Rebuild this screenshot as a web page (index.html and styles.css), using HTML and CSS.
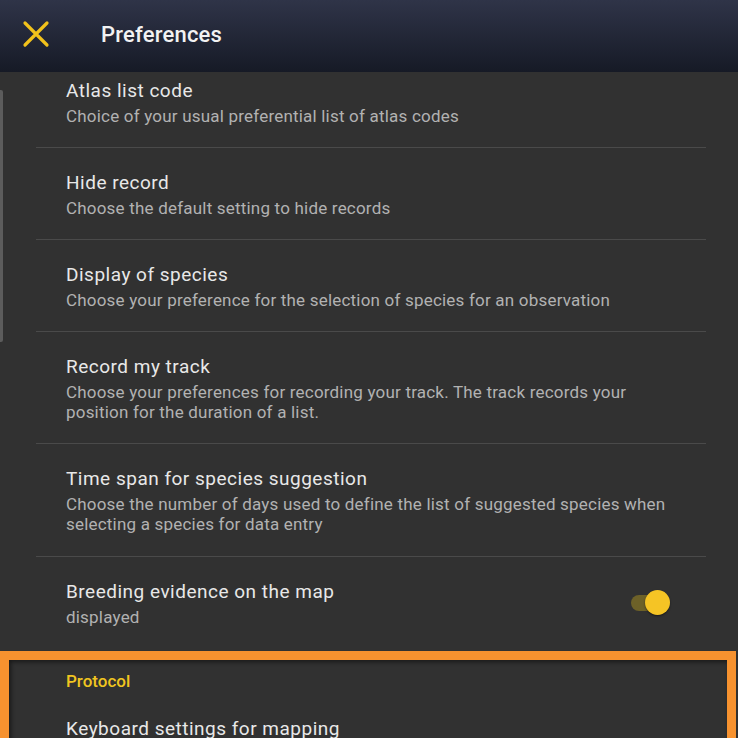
FILE: index.html
```html
<!DOCTYPE html>
<html>
<head>
<meta charset="utf-8">
<link rel="stylesheet" href="styles.css">
</head>
<body>
<div class="app">
  <header class="topbar">
    <svg class="close" width="28" height="28" viewBox="0 0 28 28"><path d="M3 3 L25 25 M25 3 L3 25" stroke="#f2c21b" stroke-width="3.2" stroke-linecap="round" fill="none"/></svg>
    <h1 class="title">Preferences</h1>
  </header>
  <main class="scroll">
    <div class="scrollbar"></div>
    <div class="list">
      <div class="item first">
        <div class="item-title">Atlas list code</div>
        <div class="item-sub">Choice of your usual preferential list of atlas codes</div>
      </div>
      <div class="item">
        <div class="item-title">Hide record</div>
        <div class="item-sub">Choose the default setting to hide records</div>
      </div>
      <div class="item">
        <div class="item-title">Display of species</div>
        <div class="item-sub">Choose your preference for the selection of species for an observation</div>
      </div>
      <div class="item tall">
        <div class="item-title">Record my track</div>
        <div class="item-sub">Choose your preferences for recording your track. The track records your position for the duration of a list.</div>
      </div>
      <div class="item tall">
        <div class="item-title">Time span for species suggestion</div>
        <div class="item-sub">Choose the number of days used to define the list of suggested species when selecting a species for data entry</div>
      </div>
      <div class="item toggle-item last">
        <div class="item-text">
          <div class="item-title">Breeding evidence on the map</div>
          <div class="item-sub">displayed</div>
        </div>
        <div class="switch"><div class="track"></div><div class="thumb"></div></div>
      </div>
      <div class="section">
        <div class="section-title">Protocol</div>
        <div class="item-title kb">Keyboard settings for mapping</div>
      </div>
    </div>
    <div class="highlight"></div>
  </main>
</div>
</body>
</html>
```
FILE: styles.css
```css
* { box-sizing: border-box; margin: 0; padding: 0; }
html, body { width: 738px; height: 738px; overflow: hidden; }
body { background: #313131; font-family: Roboto, "Noto Sans", sans-serif; color: #e6e6e6; }
.app { width: 738px; height: 738px; display: flex; flex-direction: column; }
.topbar {
  height: 72px; flex: none; display: flex; align-items: center;
  background: linear-gradient(#2f3448, #161a26);
  padding-left: 22px; position: relative; z-index: 2;
}
.close { flex: none; margin-top: -4px; }
.title { font-size: 22px; font-weight: 500; color: #f2f2f2; margin-left: 51px; margin-top: -4px; letter-spacing: 0.2px; }
.scroll { flex: 1; position: relative; overflow: hidden; }
.scrollbar { position: absolute; left: 0; top: 18px; width: 3px; height: 252px; background: #5c5c5c; border-radius: 0 2px 2px 0; }
.list { padding-left: 36px; padding-right: 32px; margin-top: -16px; }
.item { padding: 23px 0 22px 30px; border-bottom: 1px solid #4a4a4a; height: 92px; }
.item.tall { height: 112px; }
.item.tall:nth-child(5) { height: 113px; }
.item-title { font-size: 19px; line-height: 24px; color: #e8e8e8; letter-spacing: 0.5px; }
.item-sub { font-size: 17px; line-height: 20px; color: #b2b2b2; margin-top: 3px; padding-right: 30px; letter-spacing: 0.2px; }
.toggle-item { display: flex; align-items: center; justify-content: space-between; border-bottom: none; }
.toggle-item .item-text { align-self: flex-start; }
.switch { position: relative; width: 42px; height: 26px; margin-right: 34px; margin-top: -2px; }
.track { position: absolute; left: 1px; top: 5px; width: 30px; height: 16px; border-radius: 8px; background: #6d6128; }
.thumb { position: absolute; left: 15px; top: 0; width: 25px; height: 25px; border-radius: 50%; background: #f5c425; box-shadow: 0 1px 2px rgba(0,0,0,0.5); }
.section { padding: 22px 0 0 30px; }
.section-title { font-size: 17px; font-weight: 500; color: #f0c520; line-height: 20px; letter-spacing: 0; }
.kb { margin-top: 26px; }
.highlight {
  position: absolute; left: 0; top: 579px; width: 736px; height: 200px;
  border: 9px solid #f7922f; box-shadow: inset 2px 2px 4px rgba(0,0,0,0.5);
}
```
